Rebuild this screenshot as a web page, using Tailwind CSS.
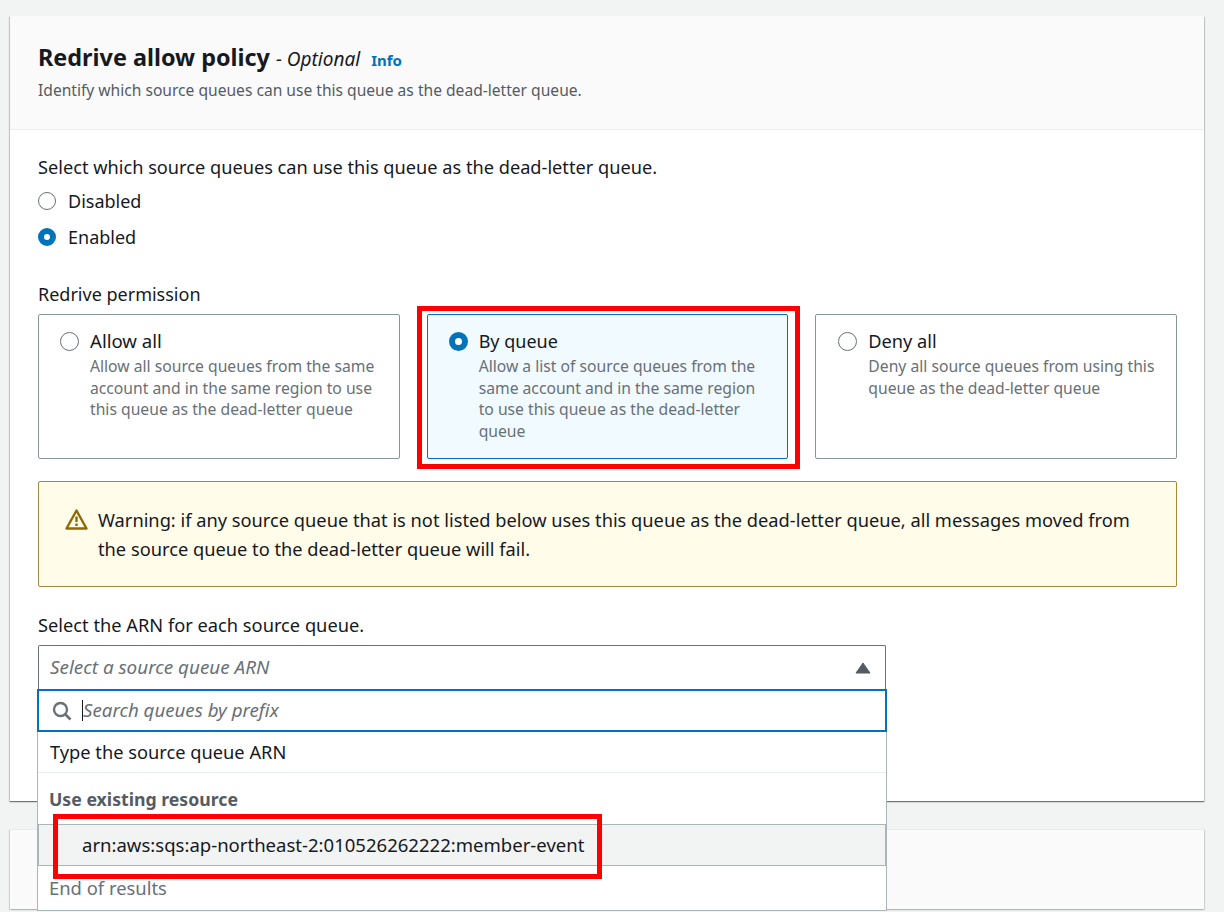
<!DOCTYPE html>
<html lang="en">
<head>
  <meta charset="UTF-8" />
  <meta name="viewport" content="width=device-width, initial-scale=1.0"/>
  <title>Redrive allow policy</title>
  <script src="https://cdn.jsdelivr.net/npm/@tailwindcss/browser@4"></script>
</head>
<body class="bg-[#f2f3f3] h-[912px] overflow-hidden font-['Noto_Sans',sans-serif] text-[#16191f]">
  <div class="pl-[10px] pr-[20px] pt-[16px]">

    <!-- Redrive allow policy card -->
    <section class="bg-white h-[785px] shadow-[0_1px_1px_0_rgba(0,28,36,0.4),1px_1px_1px_0_rgba(0,28,36,0.15),-1px_1px_1px_0_rgba(0,28,36,0.15)]">
      <header class="bg-[#fafafa] h-[114px] border-b border-[#eaeded] pl-[28px] pr-[27px] pt-[25px]">
        <div class="flex items-baseline h-[32px]">
          <h2 class="text-[23.4px] leading-[32px] font-bold">Redrive allow policy</h2>
          <span class="ml-[6px] text-[19px] italic">- Optional</span>
          <a class="ml-[11px] text-[15px] font-bold text-[#0073bb]">Info</a>
        </div>
        <p class="mt-[6px] text-[15.6px] leading-[22px] text-[#545b64]">Identify which source queues can use this queue as the dead-letter queue.</p>
      </header>

      <div class="pl-[28px] pr-[27px] pt-[25px]">
        <p class="text-[18.2px] leading-[24px]">Select which source queues can use this queue as the dead-letter queue.</p>

        <div class="mt-[10px] flex items-center gap-[12px] h-[24px]">
          <span class="w-[18px] h-[18px] rounded-full border border-[#687078] bg-white"></span>
          <span class="text-[18px]">Disabled</span>
        </div>
        <div class="mt-[12px] flex items-center gap-[12px] h-[24px]">
          <span class="w-[18px] h-[18px] rounded-full border-[6px] border-[#0073bb] bg-white"></span>
          <span class="text-[18px]">Enabled</span>
        </div>

        <p class="mt-[33px] text-[18px] leading-[24px]">Redrive permission</p>

        <div class="mt-[8px] grid grid-cols-3 gap-[27px]">
          <div class="h-[145px] border border-[#879596] rounded-[2px] pl-[21px] pr-[16px] pt-[15px] flex gap-[11px]">
            <span class="mt-[2px] shrink-0 w-[19px] h-[19px] rounded-full border border-[#687078] bg-white"></span>
            <div>
              <p class="text-[18.6px] leading-[22px]">Allow all</p>
              <p class="mt-[4px] text-[15.7px] leading-[21.6px] text-[#687078]">Allow all source queues from the same account and in the same region to use this queue as the dead-letter queue</p>
            </div>
          </div>

          <div class="relative h-[145px] border border-[#0073bb] bg-[#f1faff] rounded-[2px] pl-[21px] pr-[16px] pt-[15px] flex gap-[11px]">
            <span class="mt-[2px] shrink-0 w-[19px] h-[19px] rounded-full border-[6px] border-[#0073bb] bg-white"></span>
            <div>
              <p class="text-[18px] leading-[22px]">By queue</p>
              <p class="mt-[4px] text-[15.7px] leading-[21.6px] text-[#687078]">Allow a list of source queues from the same account and in the same region to use this queue as the dead-letter queue</p>
            </div>
            <div class="absolute -left-[11px] -right-[13px] -top-[9px] -bottom-[11px] border-[5px] border-[#ff0000]"></div>
          </div>

          <div class="h-[145px] border border-[#879596] rounded-[2px] pl-[22px] pr-[16px] pt-[15px] flex gap-[11px]">
            <span class="mt-[2px] shrink-0 w-[19px] h-[19px] rounded-full border border-[#687078] bg-white"></span>
            <div>
              <p class="text-[18.2px] leading-[22px]">Deny all</p>
              <p class="mt-[4px] text-[15.7px] leading-[21.6px] text-[#687078]">Deny all source queues from using this queue as the dead-letter queue</p>
            </div>
          </div>
        </div>

        <!-- warning -->
        <div class="mt-[22px] h-[106px] bg-[#fffce9] border border-[#a9873c] rounded-[2px] pl-[26px] pr-[20px] pt-[23px] flex gap-[10px]">
          <svg class="shrink-0 mt-[3px]" width="23" height="23" viewBox="0 0 23 23" fill="none">
            <path d="M11.5 2.5 L21.5 20.5 H1.5 Z" stroke="#906806" stroke-width="2.4" stroke-linejoin="round"/>
            <path d="M11.5 8.5 V14" stroke="#906806" stroke-width="2.4"/>
            <path d="M11.5 15.5 V18" stroke="#906806" stroke-width="2.4"/>
          </svg>
          <p class="text-[18.25px] leading-[29px]">Warning: if any source queue that is not listed below uses this queue as the dead-letter queue, all messages moved from the source queue to the dead-letter queue will fail.</p>
        </div>

        <p class="mt-[26px] text-[18.25px] leading-[24px]">Select the ARN for each source queue.</p>

        <!-- select with open dropdown -->
        <div class="relative mt-[8px] w-[848px] h-[44px]">
          <div class="h-[44px] border border-[#687078] border-b-0 rounded-t-[2px] bg-white pl-[11px] pr-[14px] flex items-center justify-between">
            <span class="text-[18.85px] italic text-[#687078]">Select a source queue ARN</span>
            <svg width="16" height="12" viewBox="0 0 16 12"><path d="M8 1 L15 11 H1 Z" fill="#545b64" stroke="#545b64" stroke-linejoin="round"/></svg>
          </div>

          <div class="absolute -left-px top-[44px] w-[850px] h-[222px] bg-white border-x border-b border-[#aab7b8] z-10">
            <div class="-mx-px h-[43px] border-2 border-[#0073bb] bg-white pl-[13px] flex items-center">
              <svg width="20" height="20" viewBox="0 0 20 20" fill="none">
                <circle cx="8.5" cy="8.5" r="6.5" stroke="#687078" stroke-width="2.4"/>
                <path d="M13.5 13.5 L18.5 18.5" stroke="#687078" stroke-width="2.6"/>
              </svg>
              <span class="ml-[10px] w-px h-[21px] bg-[#16191f]"></span>
              <span class="text-[18.7px] italic text-[#687078]">Search queues by prefix</span>
            </div>
            <div class="h-[41px] border-b border-[#eaeded] pl-[12px] flex items-center text-[18.25px]">Type the source queue ARN</div>
            <div class="h-[51px] pl-[11px] pt-[13px] text-[17.7px] leading-[26px] font-bold text-[#545b64]">Use existing resource</div>
            <div class="relative h-[42px] w-[848px] bg-[#f2f3f3] border border-[#aab7b8] pl-[43px] flex items-center text-[18.55px]">
              arn:aws:sqs:ap-northeast-2:010526262222:member-event
              <div class="absolute left-[14px] -top-[11px] w-[549px] h-[65px] border-[5px] border-[#ff0000]"></div>
            </div>
            <div class="pl-[11px] pt-[9px] text-[18.4px] leading-[26px] text-[#687078]">End of results</div>
          </div>
        </div>
      </div>
    </section>

    <!-- next card, mostly hidden -->
    <section class="mt-[28px] h-[80px] bg-[#fafafa] border-t border-[#eaeded] shadow-[1px_1px_1px_0_rgba(0,28,36,0.15),-1px_1px_1px_0_rgba(0,28,36,0.15)]"></section>
  </div>
</body>
</html>
